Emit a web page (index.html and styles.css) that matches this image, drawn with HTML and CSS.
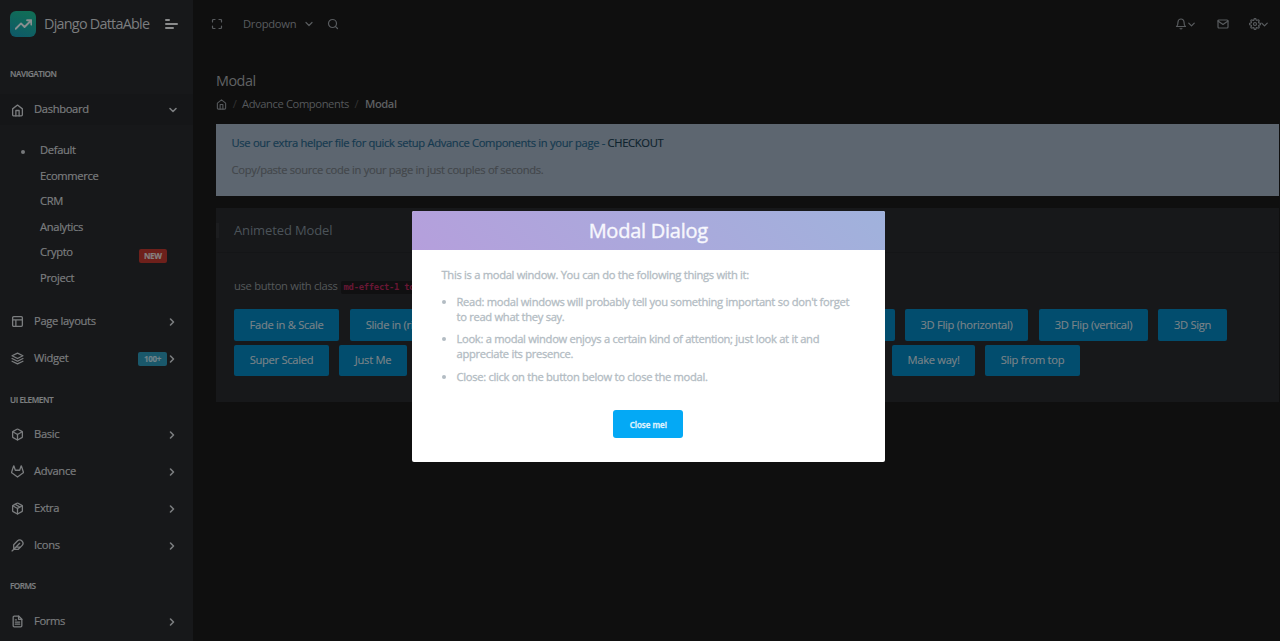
FILE: index.html
```html
<!DOCTYPE html>
<html lang="en">
<head>
<meta charset="utf-8">
<title>Modal</title>
<link rel="stylesheet" href="styles.css">
</head>
<body>
<svg class="defs" width="0" height="0">
  <symbol id="home" viewBox="0 0 24 24"><path d="M3 9l9-7 9 7v11a2 2 0 0 1-2 2H5a2 2 0 0 1-2-2z"/><path d="M9 22V12h6v10"/></symbol>
  <symbol id="layout" viewBox="0 0 24 24"><rect x="3" y="3" width="18" height="18" rx="2"/><path d="M3 9h18M9 21V9"/></symbol>
  <symbol id="layers" viewBox="0 0 24 24"><path d="M12 2L2 7l10 5 10-5zM2 17l10 5 10-5M2 12l10 5 10-5"/></symbol>
  <symbol id="box" viewBox="0 0 24 24"><path d="M21 16V8a2 2 0 0 0-1-1.73l-7-4a2 2 0 0 0-2 0l-7 4A2 2 0 0 0 3 8v8a2 2 0 0 0 1 1.73l7 4a2 2 0 0 0 2 0l7-4A2 2 0 0 0 21 16z"/><path d="M3.27 6.96L12 12.01l8.73-5.05M12 22.08V12"/></symbol>
  <symbol id="package" viewBox="0 0 24 24"><path d="M21 16V8a2 2 0 0 0-1-1.73l-7-4a2 2 0 0 0-2 0l-7 4A2 2 0 0 0 3 8v8a2 2 0 0 0 1 1.73l7 4a2 2 0 0 0 2 0l7-4A2 2 0 0 0 21 16z"/><path d="M3.27 6.96L12 12.01l8.73-5.05M12 22.08V12M16.5 9.4L7.5 4.21"/></symbol>
  <symbol id="gitlab" viewBox="0 0 24 24"><path d="M22.65 14.39L12 22.13 1.35 14.39a.84.84 0 0 1-.3-.94l1.22-3.78 2.44-7.51A.42.42 0 0 1 4.82 2a.43.43 0 0 1 .58 0 .42.42 0 0 1 .11.18l2.44 7.49h8.1l2.44-7.51A.42.42 0 0 1 18.6 2a.43.43 0 0 1 .58 0 .42.42 0 0 1 .11.18l2.44 7.51L23 13.45a.84.84 0 0 1-.35.94z"/></symbol>
  <symbol id="feather" viewBox="0 0 24 24"><path d="M20.24 12.24a6 6 0 0 0-8.49-8.49L5 10.5V19h8.5zM16 8L2 22M17.5 15H9"/></symbol>
  <symbol id="file" viewBox="0 0 24 24"><path d="M14 2H6a2 2 0 0 0-2 2v16a2 2 0 0 0 2 2h12a2 2 0 0 0 2-2V8z"/><path d="M14 2v6h6M16 13H8M16 17H8M10 9H8"/></symbol>
  <symbol id="right" viewBox="0 0 24 24"><path d="M9 18l6-6-6-6"/></symbol>
  <symbol id="down" viewBox="0 0 24 24"><path d="M6 9l6 6 6-6"/></symbol>
  <symbol id="trend" viewBox="0 0 24 24"><path d="M23 6l-9.5 9.5-5-5L1 18M17 6h6v6"/></symbol>
  <symbol id="maximize" viewBox="0 0 24 24"><path d="M8 3H5a2 2 0 0 0-2 2v3m18 0V5a2 2 0 0 0-2-2h-3m0 18h3a2 2 0 0 0 2-2v-3M3 16v3a2 2 0 0 0 2 2h3"/></symbol>
  <symbol id="search" viewBox="0 0 24 24"><circle cx="11" cy="11" r="8"/><path d="M21 21l-4.35-4.35"/></symbol>
  <symbol id="bell" viewBox="0 0 24 24"><path d="M18 8A6 6 0 0 0 6 8c0 7-3 9-3 9h18s-3-2-3-9M13.73 21a2 2 0 0 1-3.46 0"/></symbol>
  <symbol id="mail" viewBox="0 0 24 24"><path d="M4 4h16a2 2 0 0 1 2 2v12a2 2 0 0 1-2 2H4a2 2 0 0 1-2-2V6a2 2 0 0 1 2-2z"/><path d="M22 6l-10 7L2 6"/></symbol>
  <symbol id="settings" viewBox="0 0 24 24"><circle cx="12" cy="12" r="3"/><path d="M19.4 15a1.65 1.65 0 0 0 .33 1.82l.06.06a2 2 0 1 1-2.83 2.83l-.06-.06a1.65 1.65 0 0 0-2.8 1.17V21a2 2 0 0 1-4 0v-.09a1.65 1.65 0 0 0-2.9-1.18l-.06.06a2 2 0 1 1-2.83-2.83l.06-.06A1.65 1.65 0 0 0 3.1 14H3a2 2 0 0 1 0-4h.09a1.65 1.65 0 0 0 1.18-2.9l-.06-.06a2 2 0 1 1 2.83-2.83l.06.06A1.65 1.65 0 0 0 10 3.1V3a2 2 0 0 1 4 0v.09a1.65 1.65 0 0 0 2.8 1.18l.06-.06a2 2 0 1 1 2.83 2.83l-.06.06A1.65 1.65 0 0 0 20.9 10H21a2 2 0 0 1 0 4h-.09a1.65 1.65 0 0 0-1.51 1z"/></symbol>
</svg>

<div class="app">
  <aside class="sidebar">
    <div class="brand">
      <span class="logo"><svg class="icon"><use href="#trend"/></svg></span>
      <span class="brand-name">Django DattaAble</span>
      <span class="burger"><i></i><i></i><i></i></span>
    </div>
    <div class="caption caption-first">NAVIGATION</div>
    <div class="item item-open"><svg class="icon"><use href="#home"/></svg><span>Dashboard</span><svg class="icon arrow"><use href="#down"/></svg></div>
    <div class="submenu">
      <div class="sub active">Default</div>
      <div class="sub">Ecommerce</div>
      <div class="sub">CRM</div>
      <div class="sub">Analytics</div>
      <div class="sub">Crypto<span class="badge badge-new">NEW</span></div>
      <div class="sub">Project</div>
    </div>
    <div class="item"><svg class="icon"><use href="#layout"/></svg><span>Page layouts</span><svg class="icon arrow"><use href="#right"/></svg></div>
    <div class="item"><svg class="icon"><use href="#layers"/></svg><span>Widget</span><b class="badge badge-count">100+</b><svg class="icon arrow"><use href="#right"/></svg></div>
    <div class="caption">UI ELEMENT</div>
    <div class="item"><svg class="icon"><use href="#box"/></svg><span>Basic</span><svg class="icon arrow"><use href="#right"/></svg></div>
    <div class="item"><svg class="icon"><use href="#gitlab"/></svg><span>Advance</span><svg class="icon arrow"><use href="#right"/></svg></div>
    <div class="item"><svg class="icon"><use href="#package"/></svg><span>Extra</span><svg class="icon arrow"><use href="#right"/></svg></div>
    <div class="item"><svg class="icon"><use href="#feather"/></svg><span>Icons</span><svg class="icon arrow"><use href="#right"/></svg></div>
    <div class="caption caption-forms">FORMS</div>
    <div class="item"><svg class="icon"><use href="#file"/></svg><span>Forms</span><svg class="icon arrow"><use href="#right"/></svg></div>
  </aside>

  <main class="main">
    <header class="topbar">
      <svg class="icon"><use href="#maximize"/></svg>
      <span class="dropdown">Dropdown</span>
      <svg class="icon dropdown-arrow"><use href="#down"/></svg>
      <svg class="icon"><use href="#search"/></svg>
      <div class="tools">
        <span class="tool"><svg class="icon"><use href="#bell"/></svg><svg class="icon caret"><use href="#down"/></svg></span>
        <span class="tool"><svg class="icon"><use href="#mail"/></svg></span>
        <span class="tool"><svg class="icon"><use href="#settings"/></svg><svg class="icon caret"><use href="#down"/></svg></span>
      </div>
    </header>
    <h1 class="title">Modal</h1>
    <nav class="crumbs"><svg class="icon"><use href="#home"/></svg><i>/</i><span>Advance Components</span><i>/</i><b>Modal</b></nav>
    <section class="notice">
      <p class="notice-lead">Use our extra helper file for quick setup Advance Components in your page - <a>CHECKOUT</a></p>
      <p class="notice-sub">Copy/paste source code in your page in just couples of seconds.</p>
    </section>
    <section class="card">
      <h2 class="card-title">Animeted Model</h2>
      <div class="card-body">
        <p class="usage">use button with class <code>md-effect-1 to</code></p>
        <div class="row">
          <button class="btn w105">Fade in &amp; Scale</button>
          <button class="btn w98">Slide in (right)</button>
          <button class="btn fill-top"></button>
          <button class="btn w123">3D Flip (horizontal)</button>
          <button class="btn w109">3D Flip (vertical)</button>
          <button class="btn w69">3D Sign</button>
        </div>
        <div class="row row-second">
          <button class="btn w95">Super Scaled</button>
          <button class="btn w68">Just Me</button>
          <button class="btn fill-bottom"></button>
          <button class="btn w83">Make way!</button>
          <button class="btn w95">Slip from top</button>
        </div>
      </div>
    </section>
  </main>
</div>

<div class="modal">
  <h3 class="modal-title">Modal Dialog</h3>
  <div class="modal-body">
    <p>This is a modal window. You can do the following things with it:</p>
    <ul>
      <li>Read: modal windows will probably tell you something important so don't forget to read what they say.</li>
      <li>Look: a modal window enjoys a certain kind of attention; just look at it and appreciate its presence.</li>
      <li>Close: click on the button below to close the modal.</li>
    </ul>
    <button class="close">Close me!</button>
  </div>
</div>
</body>
</html>
```
FILE: styles.css
```css
* { box-sizing: border-box; }
body {
  margin: 0;
  height: 641px;
  overflow: hidden;
  background: #0f0f0f;
  color: #55585b;
  font: 11.2px/1.5 "Open Sans", sans-serif;
}
h1, h2, h3, p, ul { margin: 0; padding: 0; font-weight: 400; }
.defs { position: absolute; }
.icon {
  width: 12px;
  height: 12px;
  flex: none;
  fill: none;
  stroke: currentColor;
  stroke-width: 2.4;
  stroke-linecap: round;
  stroke-linejoin: round;
}
.app { display: flex; height: 641px; }

.sidebar { width: 193px; flex: none; background: #17181a; color: #7b7d7f; letter-spacing: -0.34px; overflow: hidden; -webkit-text-stroke: 0.2px; }
.brand { display: flex; align-items: center; height: 48px; padding-left: 10px; -webkit-text-stroke: 0; }
.logo {
  display: flex; align-items: center; justify-content: center;
  width: 26px; height: 26px; border-radius: 6px;
  background: linear-gradient(20deg, #0e5869, #117054);
  color: #898f90;
}
.logo .icon { width: 17px; height: 17px; stroke-width: 2.6; }
.brand-name { width: 122px; padding-left: 8px; font-size: 14.4px; letter-spacing: -0.76px; white-space: nowrap; }
.burger { display: flex; flex-direction: column; gap: 2px; padding-left: 7px; }
.burger i { height: 2px; width: 13px; border-radius: 1px; background: #8a8b8c; }
.burger i:first-child { width: 5px; }
.burger i:last-child { width: 9px; }
.caption { display: flex; align-items: center; height: 39px; padding: 7px 0 0 10px; font-size: 8.2px; font-weight: 600; letter-spacing: -0.43px; }
.caption-first { height: 46px; padding-top: 6px; }
.caption-forms { height: 38.6px; padding-top: 6px; letter-spacing: -0.5px; }
.item { display: flex; align-items: center; height: 37px; padding: 0 15px 0 11px; }
.item > .icon:first-child { width: 13px; height: 13px; margin-top: 1px; }
.item > span { margin-left: 10px; }
.item .arrow { margin: 1px 0 0 auto; stroke-width: 3.2; }
.item-open { height: 31px; padding-right: 14px; background: #151618; }
.submenu { padding: 12.6px 0 11.8px; }
.sub { position: relative; display: flex; align-items: center; height: 25.6px; padding-left: 40px; }
.active::before { content: ""; position: absolute; left: 21px; top: 12px; width: 4px; height: 4px; border-radius: 50%; background: #77797b; }
.badge { height: 14px; border-radius: 2px; font-size: 8px; line-height: 14px; font-weight: 700; text-align: center; }
.badge-new { width: 28px; margin: 7px 0 0 66px; background: #6e201b; color: #858080; }
.badge-count { width: 29px; margin: 1px 0 0 auto; background: #1a586b; color: #70838a; line-height: 13px; }
.item .badge-count + .arrow { margin-left: -1px; }

.main { flex: 1; min-width: 0; padding: 0 1px 0 23px; }
.topbar { display: flex; align-items: center; height: 48px; margin-left: -5px; letter-spacing: -0.25px; color: #595c5f; }
.dropdown { width: 53px; margin-left: 20px; }
.dropdown-arrow { width: 12px; height: 12px; margin: 0 12px 0 7px; }
.tools { display: flex; gap: 20px; margin-left: auto; padding-right: 9px; }
.tool { display: flex; align-items: center; }
.tool .icon { width: 12px; height: 12px; }
.tool .caret { width: 11px; height: 11px; margin-left: -1.5px; stroke-width: 2.7; }
.title { height: 25px; margin-top: 20px; font-size: 14.4px; line-height: 25px; letter-spacing: -0.5px; color: #606264; }
.crumbs { display: flex; align-items: center; height: 21px; padding-top: 2px; letter-spacing: -0.4px; }
.crumbs .icon { width: 11px; height: 11px; }
.crumbs i { width: 15px; font-style: normal; text-align: center; color: #333; }
.crumbs b { margin-left: 1px; font-weight: 600; color: #5d5f61; }
.notice { height: 72px; margin-top: 10px; padding: 11px 16px 0 15.5px; background: #5d6670; letter-spacing: -0.325px; -webkit-text-stroke: 0.15px; }
.notice p { height: 27px; white-space: nowrap; }
.notice-lead { color: #14394f; }
.notice-lead a { color: #0d222d; }
.notice-sub { color: #43474b; }
.card { height: 194px; margin-top: 12px; background: #17181a; }
.card-title { height: 45px; padding-left: 15px; border-bottom: 1px solid #141517; border-left: 3px solid transparent; font-size: 13px; line-height: 44px; letter-spacing: -0.12px; color: #4b5359; background: linear-gradient(#1c1d1f, #1c1d1f) 0 15px / 3px 15px no-repeat border-box; background-origin: border-box; }
.card-body { padding: 25px 18px 0; }
.usage { display: flex; align-items: center; height: 17px; gap: 3px; white-space: nowrap; letter-spacing: -0.3px; }
.usage code { margin-top: 2px; padding: 1px 3px; border-radius: 2px; background: #101011; color: #691735; font: bold 8.8px/11px "DejaVu Sans Mono", monospace; letter-spacing: -0.25px; }
.row { display: flex; margin-top: 14px; }
.row-second { margin-top: 4px; }
.btn { height: 32px; margin-right: 10px; padding: 0 0 1px; border: 0; border-radius: 2px; background: #024d6e; color: #7a8388; font: 11.2px/30px "Open Sans", sans-serif; letter-spacing: -0.3px; white-space: nowrap; -webkit-text-stroke: 0.15px; }
.row-second .btn { height: 31px; padding-bottom: 2px; line-height: 28px; }
.w105 { width: 105px; margin-right: 11px; }
.w98 { width: 98px; margin-right: 0; }
.w123 { width: 123px; margin-right: 11px; }
.w109 { width: 109px; }
.w69 { width: 69px; }
.w95 { width: 95px; }
.w68 { width: 68px; }
.w83 { width: 83px; }
.fill-top { width: 447px; }
.fill-bottom { width: 465px; }

.modal {
  position: absolute; left: 411.5px; top: 210.5px;
  width: 473.5px; height: 251px;
  border-radius: 2px; overflow: hidden;
  background: #fff; color: #b3bcc3;
}
.modal-title { height: 39px; background: linear-gradient(45deg, #b59fdc, #a0b2dc); color: #f7f7fd; font-size: 20px; line-height: 40px; text-align: center; letter-spacing: -0.25px; -webkit-text-stroke: 0.4px; }
.modal-body { padding: 17px 30px 0; line-height: 15px; letter-spacing: -0.31px; -webkit-text-stroke: 0.3px; }
.modal ul { margin: 12px 0 26.5px; padding-left: 15px; }
.modal li { margin-bottom: 7.5px; }
.modal li::marker { font-size: 11px; }
.close { display: block; width: 70px; height: 28px; margin: 0 auto; border: 0; border-radius: 3px; background: #04a9f5; color: #e2f5fe; font: 600 8px/28px "Open Sans", sans-serif; }
```
